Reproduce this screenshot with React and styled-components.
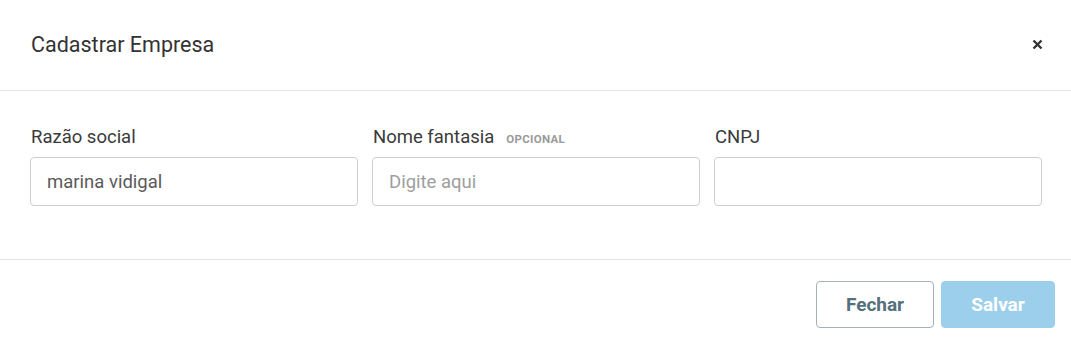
import React from "react";
import styled, { createGlobalStyle } from "styled-components";

const GlobalStyle = createGlobalStyle`
  body {
    margin: 0;
    background: #ffffff;
    font-family: Roboto, "Liberation Sans", sans-serif;
  }
  * {
    box-sizing: border-box;
  }
`;

const Modal = styled.div`
  width: 1071px;
  background: #ffffff;
`;

const Header = styled.div`
  height: 91px;
  display: flex;
  align-items: center;
  justify-content: space-between;
  padding: 0 28px 2px 31px;
  border-bottom: 1px solid #e4e4e4;
`;

const Title = styled.h2`
  margin: 0;
  font-size: 21.5px;
  font-weight: 400;
  color: #333333;
`;

const CloseButton = styled.button`
  border: none;
  background: none;
  padding: 0;
  width: 12px;
  height: 12px;
  display: flex;
  align-items: center;
  justify-content: center;
  cursor: pointer;
`;

const Form = styled.div`
  display: grid;
  grid-template-columns: repeat(3, 1fr);
  column-gap: 14px;
  padding: 34px 29px 53px 30px;
  border-bottom: 1px solid #e4e4e4;
`;

const Field = styled.div`
  display: flex;
  flex-direction: column;
`;

const Label = styled.label`
  display: flex;
  align-items: baseline;
  gap: 12px;
  height: 24px;
  padding-left: 1px;
  font-size: 18.5px;
  line-height: 24px;
  color: #3a3a3a;
  margin-bottom: 8px;
  white-space: nowrap;
`;

const Optional = styled.span`
  font-size: 11.5px;
  line-height: 24px;
  font-weight: 700;
  letter-spacing: 0.3px;
  color: #9a9a9a;
`;

const Input = styled.input`
  height: 49px;
  width: 100%;
  border: 1px solid #cfcfcf;
  border-radius: 4px;
  padding: 0 16px;
  font-family: Roboto, "Liberation Sans", sans-serif;
  font-size: 18.5px;
  color: #5a5a5a;
  outline: none;
  &::placeholder {
    color: #9e9e9e;
  }
`;

const Footer = styled.div`
  display: flex;
  justify-content: flex-end;
  gap: 7px;
  padding: 21px 16px 16px;
`;

const Button = styled.button`
  height: 47px;
  width: ${(p) => p.width}px;
  border-radius: 4px;
  font-family: Roboto, "Liberation Sans", sans-serif;
  font-size: 19px;
  font-weight: 700;
  border: 1px solid ${(p) => (p.primary ? "#9ccfeb" : "#a3b1b8")};
  background: ${(p) => (p.primary ? "#9ccfeb" : "#ffffff")};
  color: ${(p) => (p.primary ? "#ffffff" : "#55707c")};
  cursor: pointer;
`;

export default function App() {
  return (
    <>
      <GlobalStyle />
      <Modal>
        <Header>
          <Title>Cadastrar Empresa</Title>
          <CloseButton aria-label="Fechar">
            <svg width="11" height="11" viewBox="0 0 11 11">
              <path
                d="M1.5 1.5 L9.5 9.5 M9.5 1.5 L1.5 9.5"
                stroke="#333"
                strokeWidth="2.4"
                strokeLinecap="butt"
              />
            </svg>
          </CloseButton>
        </Header>
        <Form>
          <Field>
            <Label>Razão social</Label>
            <Input defaultValue="marina vidigal" />
          </Field>
          <Field>
            <Label>
              Nome fantasia <Optional>OPCIONAL</Optional>
            </Label>
            <Input placeholder="Digite aqui" />
          </Field>
          <Field>
            <Label>CNPJ</Label>
            <Input />
          </Field>
        </Form>
        <Footer>
          <Button width={118}>Fechar</Button>
          <Button width={114} primary>
            Salvar
          </Button>
        </Footer>
      </Modal>
    </>
  );
}
